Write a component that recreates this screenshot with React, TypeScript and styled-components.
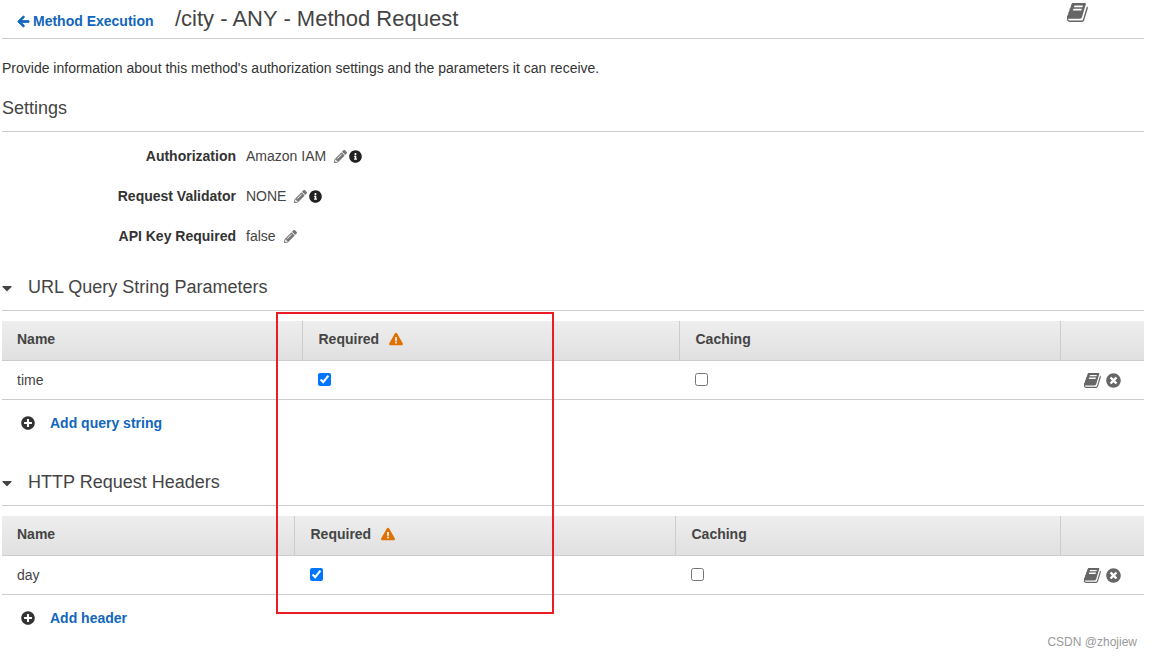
import React from "react";
import styled, { createGlobalStyle } from "styled-components";
import { FaArrowLeft, FaPencilAlt, FaInfoCircle, FaPlusCircle, FaTimesCircle, FaExclamationTriangle, FaCaretDown } from "react-icons/fa";

const Global = createGlobalStyle`
  html, body { margin: 0; padding: 0; background: #fff; }
  body { font-family: "Liberation Sans", Arial, sans-serif; color: #444; font-size: 14px; }
  #root { width: 1152px; height: 658px; overflow: hidden; }
`;

const Page = styled.div`
  position: relative;
  width: 1142px;
  height: 658px;
  padding-left: 2px;
  box-sizing: content-box;
`;

const Header = styled.div`
  height: 38px;
  border-bottom: 1px solid #ccc;
  display: flex;
  align-items: flex-start;
`;

const BackLink = styled.a`
  display: flex;
  align-items: center;
  gap: 3px;
  margin: 13px 0 0 15px;
  width: 158px;
  color: #1166bb;
  font-weight: 700;
  font-size: 14px;
  line-height: 16px;
  svg {
    stroke: currentColor;
    stroke-width: 30px;
  }
`;

const Title = styled.h1`
  margin: 5px 0 0 0;
  font-size: 22px;
  font-weight: 400;
  line-height: 27px;
  color: #444;
  flex: 1;
`;

const TopBook = styled.span`
  display: inline-flex;
  margin: 3px 56px 0 0;
`;

const BookSvg = styled.svg`
  fill: #666;
  display: block;
`;

const Description = styled.p`
  margin: 20px 0 0;
  font-size: 14px;
  line-height: 18px;
  color: #333;
`;

const SectionHeading = styled.h2`
  margin: 20px 0 0;
  padding-bottom: 11px;
  height: 23px;
  line-height: 23px;
  font-size: 18px;
  font-weight: 400;
  color: #444;
  border-bottom: 1px solid #ccc;
`;

const SettingsList = styled.div`
  display: flex;
  flex-direction: column;
  gap: 22px;
  margin-top: 15px;
`;

const SettingRow = styled.div`
  display: flex;
  align-items: center;
  height: 18px;
`;

const SettingLabel = styled.span`
  width: 234px;
  text-align: right;
  font-weight: 700;
  color: #333;
  font-size: 14px;
`;

const SettingValue = styled.span`
  margin-left: 10px;
  color: #444;
  font-size: 14px;
`;

const Pencil = styled.span`
  display: inline-flex;
  color: #777;
  font-size: 13px;
  margin-left: 8px;
`;

const Info = styled.span`
  display: inline-flex;
  color: #222;
  font-size: 13px;
  margin-left: 2px;
`;

const CollapseHeading = styled.div<{ $top: number }>`
  margin-top: ${(p) => p.$top}px;
  height: 23px;
  padding-bottom: 11px;
  display: flex;
  align-items: center;
  border-bottom: 1px solid #ccc;
  font-size: 18px;
  color: #444;
`;

const Caret = styled.span`
  width: 26px;
  display: inline-flex;
  color: #444;
  font-size: 16px;
  margin-left: -3px;
  margin-right: 3px;
`;

const Table = styled.div<{ $cols: string }>`
  margin-top: 10px;
  display: grid;
  grid-template-columns: ${(p) => p.$cols};
`;

const HeadCell = styled.div<{ $first?: boolean }>`
  height: 35px;
  padding-bottom: 4px;
  display: flex;
  align-items: center;
  gap: 10px;
  padding-left: ${(p) => (p.$first ? 15 : 15.5)}px;
  font-weight: 700;
  font-size: 14px;
  color: #444;
  background: linear-gradient(#eeeeee, #e0e0e0);
  border-bottom: 1px solid #ccc;
  border-left: ${(p) => (p.$first ? "0" : "1px solid #ccc")};
  box-sizing: content-box;
`;

const Warn = styled.span`
  display: inline-flex;
  color: #e07000;
  font-size: 14px;
`;

const BodyCell = styled.div`
  height: 38px;
  display: flex;
  align-items: center;
  padding-left: 15px;
  font-size: 14px;
  color: #444;
  border-bottom: 1px solid #ccc;
`;

const Check = styled.input`
  width: 13px;
  height: 13px;
  margin: 0 0 2px 1px;
`;

const Actions = styled(BodyCell)`
  padding-left: 24px;
  gap: 5px;
  color: #666;
  font-size: 15px;
`;

const AddRow = styled.div`
  height: 46px;
  display: flex;
  align-items: center;
  padding-left: 19px;
  gap: 15px;
`;

const PlusIcon = styled.span`
  display: inline-flex;
  color: #333;
  font-size: 14px;
`;

const AddLink = styled.a`
  color: #1166bb;
  font-weight: 700;
  font-size: 14px;
`;

const RedBox = styled.div`
  position: absolute;
  left: 276px;
  top: 312px;
  width: 274px;
  height: 298px;
  border: 2px solid #ed1c24;
  pointer-events: none;
`;

const Watermark = styled.span`
  position: absolute;
  right: 7px;
  top: 635px;
  font-size: 12px;
  color: #999;
`;

const BOOK =
  "M1703 478q40 57 18 129l-275 906q-19 64-76.5 107.5t-122.5 43.5h-923q-77 0-148.5-53.5t-99.5-131.5q-24-67-2-127 0-4 3-27t4-37q1-8-3-21.5t-3-19.5q2-11 8-21t16.5-23.5 16.5-23.5q23-38 45-91.5t30-91.5q3-10 .5-30t-.5-28q3-11 17-28t17-23q21-36 42-92t25-90q1-9-2.5-32t.5-28q4-13 22-30.5t22-22.5q19-26 42.5-84.5t27.5-96.5q1-8-3-25.5t-2-26.5q2-8 9-18t18-23 17-21q8-12 16.5-30.5t15-35 16-36 19.5-32 26.5-23.5 36-11.5 47.5 5.5l-1 3q38-9 51-9h761q74 0 114 56t18 130l-274 906q-36 119-71.5 153.5t-128.5 34.5h-869q-27 0-38 15-11 16-1 43 24 70 144 70h923q29 0 56-15.5t35-41.5l300-987q7-22 5-57 38 15 59 43zm-1064 2q-4 13 2 22.5t20 9.5h608q13 0 25.5-9.5t16.5-22.5l21-64q4-13-2-22.5t-20-9.5h-608q-13 0-25.5 9.5t-16.5 22.5zm-83 256q-4 13 2 22.5t20 9.5h608q13 0 25.5-9.5t16.5-22.5l21-64q4-13-2-22.5t-20-9.5h-608q-13 0-25.5 9.5t-16.5 22.5z";

function BookIcon({ w, h }: { w: number; h: number }) {
  return (
    <BookSvg width={w} height={h} viewBox="90 190 1650 1470" preserveAspectRatio="none">
      <path d={BOOK} />
    </BookSvg>
  );
}

type ParamProps = { title: string; cols: string; name: string; add: string; top: number };

function ParamSection({ title, cols, name, add, top }: ParamProps) {
  return (
    <>
      <CollapseHeading $top={top}>
        <Caret><FaCaretDown /></Caret>
        {title}
      </CollapseHeading>
      <Table $cols={cols}>
        <HeadCell $first>Name</HeadCell>
        <HeadCell>
          Required
          <Warn><FaExclamationTriangle /></Warn>
        </HeadCell>
        <HeadCell>Caching</HeadCell>
        <HeadCell />
        <BodyCell>{name}</BodyCell>
        <BodyCell><Check type="checkbox" checked readOnly /></BodyCell>
        <BodyCell><Check type="checkbox" readOnly /></BodyCell>
        <Actions>
          <BookIcon w={17} h={15} />
          <FaTimesCircle />
        </Actions>
      </Table>
      <AddRow>
        <PlusIcon><FaPlusCircle /></PlusIcon>
        <AddLink>{add}</AddLink>
      </AddRow>
    </>
  );
}

export default function App() {
  return (
    <Page>
      <Global />
      <Header>
        <BackLink><FaArrowLeft size={13} />Method Execution</BackLink>
        <Title>/city - ANY - Method Request</Title>
        <TopBook><BookIcon w={21} h={19} /></TopBook>
      </Header>
      <Description>Provide information about this method's authorization settings and the parameters it can receive.</Description>
      <SectionHeading>Settings</SectionHeading>
      <SettingsList>
        <SettingRow>
          <SettingLabel>Authorization</SettingLabel>
          <SettingValue>Amazon IAM</SettingValue>
          <Pencil><FaPencilAlt /></Pencil>
          <Info><FaInfoCircle /></Info>
        </SettingRow>
        <SettingRow>
          <SettingLabel>Request Validator</SettingLabel>
          <SettingValue>NONE</SettingValue>
          <Pencil><FaPencilAlt /></Pencil>
          <Info><FaInfoCircle /></Info>
        </SettingRow>
        <SettingRow>
          <SettingLabel>API Key Required</SettingLabel>
          <SettingValue>false</SettingValue>
          <Pencil><FaPencilAlt /></Pencil>
        </SettingRow>
      </SettingsList>
      <ParamSection top={31} title="URL Query String Parameters" cols="300px 377px 381px 84px" name="time" add="Add query string" />
      <ParamSection top={25} title="HTTP Request Headers" cols="292px 381px 385px 84px" name="day" add="Add header" />
      <RedBox />
      <Watermark>CSDN @zhojiew</Watermark>
    </Page>
  );
}
